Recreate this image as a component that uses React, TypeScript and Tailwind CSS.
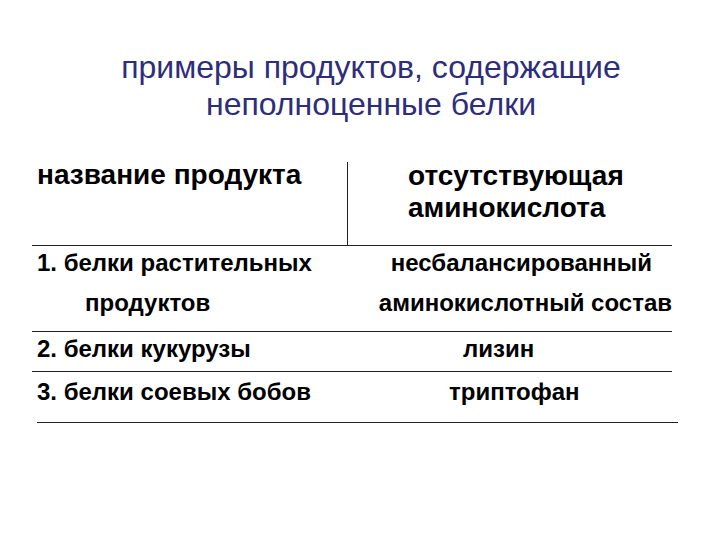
import React from "react";

export default function App() {
  return (
    <div className="w-[720px] h-[540px] bg-white overflow-hidden font-['Liberation_Sans',Arial,sans-serif] text-black">
      <div className="pt-[49px] pl-[22px] text-center text-[32px] leading-[37px] text-[#2e2d7a]">
        <div>примеры продуктов, содержащие</div>
        <div>неполноценные белки</div>
      </div>
      <div className="mt-[39px] ml-[32px] w-[640px] font-bold">
        <div className="flex h-[84px] border-b border-[#222]">
          <div className="w-[316px] border-r border-[#222] pl-[5px] text-[28px] leading-[32px] whitespace-nowrap">
            <div className="-mt-[3px]">название продукта</div>
          </div>
          <div className="flex-1 pl-[60px] text-[28px] leading-[32px] whitespace-nowrap">
            <div className="-mt-[2px]">отсутствующая</div>
            <div>аминокислота</div>
          </div>
        </div>
        <div className="flex h-[86px] border-b border-[#222] text-[24px] leading-[30px] whitespace-nowrap pt-[2px]">
          <div className="w-[316px] pl-[5px]">
            <div>1. белки растительных</div>
            <div className="mt-[10px] pl-[48px]">продуктов</div>
          </div>
          <div className="flex-1">
            <div className="pl-[45px]">несбалансированный</div>
            <div className="mt-[10px] pl-[33px]">аминокислотный состав</div>
          </div>
        </div>
        <div className="flex h-[40px] border-b border-[#222] text-[24px] leading-[34px] whitespace-nowrap">
          <div className="w-[316px] pl-[5px]">2. белки кукурузы</div>
          <div className="flex-1 pl-[115px]">лизин</div>
        </div>
        <div className="flex h-[50px] text-[24px] leading-[40px] whitespace-nowrap">
          <div className="w-[316px] pl-[5px]">3. белки соевых бобов</div>
          <div className="flex-1 pl-[101px]">триптофан</div>
        </div>
        <div className="ml-[5px] w-[641px] border-b border-[#222]"></div>
      </div>
    </div>
  );
}
